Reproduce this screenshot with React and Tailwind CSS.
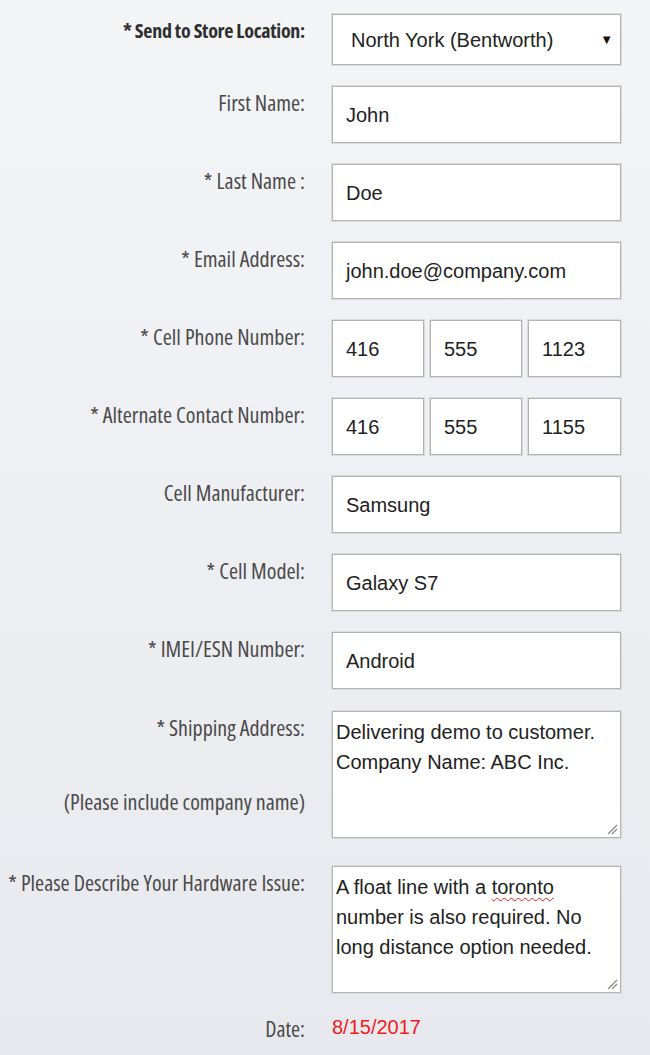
import React from "react";

function Label({ children, bold, className = "" }) {
  return (
    <div
      className={`w-[305px] shrink-0 text-right leading-[24px] font-stretch-condensed [font-family:'Open_Sans',sans-serif] ${
        bold ? "font-bold text-[20px] tracking-[-0.3px] text-[#2f2f2f]" : "text-[22px] text-[#4a4a4a]"
      } ${className}`}
    >
      {children}
    </div>
  );
}

const boxCls =
  "bg-white border border-[#b3b3b3] shadow-[0_0_0_1px_#dcdcdc] text-[20px] text-[#222] [font-family:'Liberation_Sans',Arial,sans-serif]";

function Input({ value, className = "" }) {
  return (
    <div className={`${boxCls} h-[57px] flex items-center pl-[13px] ${className}`}>{value}</div>
  );
}

function Resize() {
  return (
    <svg className="absolute right-[2px] bottom-[2px]" width="12" height="12" viewBox="0 0 12 12">
      <line x1="11" y1="2" x2="2" y2="11" stroke="#8a8a8a" strokeWidth="1.2" />
      <line x1="11" y1="6" x2="6" y2="11" stroke="#8a8a8a" strokeWidth="1.2" />
    </svg>
  );
}

function Row({ label, bold, children, labelClass = "", className = "" }) {
  return (
    <div className={`flex gap-[27px] ${className}`}>
      <Label bold={bold} className={labelClass}>
        {label}
      </Label>
      <div className="w-[289px]">{children}</div>
    </div>
  );
}

export default function App() {
  return (
    <div className="w-[650px] h-[1055px] overflow-hidden bg-gradient-to-b from-[#f4f5f7] to-[#e8e9ee] pt-[14px]">
      <Row label="* Send to Store Location:" bold labelClass="pt-[5px]">
        <div className={`${boxCls} h-[51px] flex items-center justify-between pl-[18px] pr-[7px]`}>
          <span>North York (Bentworth)</span>
          <span className="text-[13px] text-[#111]">▼</span>
        </div>
      </Row>
      <Row label="First Name:" labelClass="pt-[4px]" className="mt-[21px]">
        <Input value="John" />
      </Row>
      <Row label="* Last Name :" labelClass="pt-[4px]" className="mt-[21px]">
        <Input value="Doe" />
      </Row>
      <Row label="* Email Address:" labelClass="pt-[4px]" className="mt-[21px]">
        <Input value="john.doe@company.com" />
      </Row>
      <Row label="* Cell Phone Number:" labelClass="pt-[4px]" className="mt-[21px]">
        <div className="flex gap-[6px]">
          <Input value="416" className="w-[92px]" />
          <Input value="555" className="w-[92px]" />
          <Input value="1123" className="w-[93px]" />
        </div>
      </Row>
      <Row label="* Alternate Contact Number:" labelClass="pt-[4px]" className="mt-[21px]">
        <div className="flex gap-[6px]">
          <Input value="416" className="w-[92px]" />
          <Input value="555" className="w-[92px]" />
          <Input value="1155" className="w-[93px]" />
        </div>
      </Row>
      <Row label="Cell Manufacturer:" labelClass="pt-[4px]" className="mt-[21px]">
        <Input value="Samsung" />
      </Row>
      <Row label="* Cell Model:" labelClass="pt-[4px]" className="mt-[21px]">
        <Input value="Galaxy S7" />
      </Row>
      <Row label="* IMEI/ESN Number:" labelClass="pt-[4px]" className="mt-[21px]">
        <Input value="Android" />
      </Row>
      <Row
        label={
          <div className="flex flex-col gap-[50px]">
            <span>* Shipping Address:</span>
            <span>(Please include company name)</span>
          </div>
        }
        labelClass="pt-[4px]"
        className="mt-[22px]"
      >
        <div className={`${boxCls} relative h-[127px] pl-[3px] pt-[5px] leading-[30px]`}>
          <div>Delivering demo to customer.</div>
          <div>Company Name: ABC Inc.</div>
          <Resize />
        </div>
      </Row>
      <Row label="* Please Describe Your Hardware Issue:" labelClass="pt-[4px]" className="mt-[28px]">
        <div className={`${boxCls} relative h-[127px] pl-[3px] pt-[5px] leading-[30px]`}>
          <div>
            A float line with a{" "}
            <span className="underline decoration-wavy decoration-[#e02020] decoration-1 underline-offset-[3px]">
              toronto
            </span>
          </div>
          <div>number is also required. No</div>
          <div>long distance option needed.</div>
          <Resize />
        </div>
      </Row>
      <Row label="Date:" labelClass="pt-[1px]" className="mt-[22px]">
        <div className="text-[20px] leading-[24px] text-[#f01c1c] [font-family:'Liberation_Sans',Arial,sans-serif]">
          8/15/2017
        </div>
      </Row>
    </div>
  );
}
